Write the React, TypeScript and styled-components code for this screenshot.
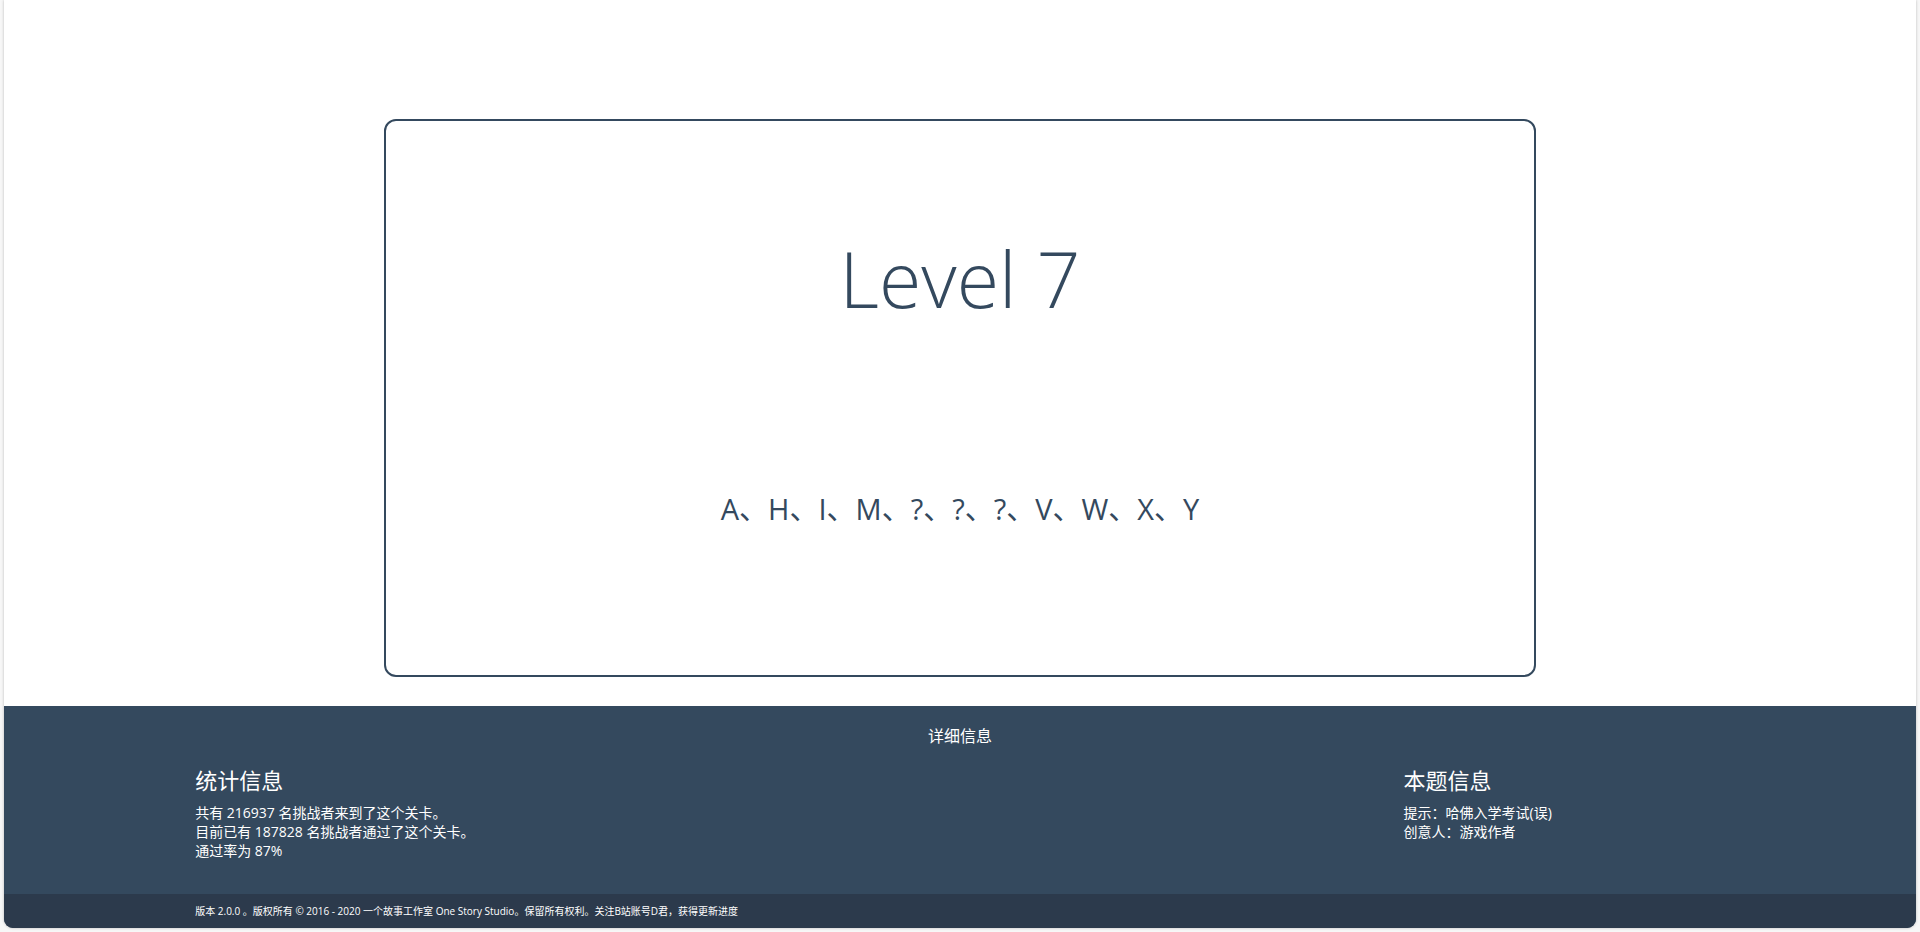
import React from "react";
import styled, { createGlobalStyle } from "styled-components";

const GlobalStyle = createGlobalStyle`
  html, body, #root { height: 100%; }
  body {
    margin: 0;
    background: #f7f7f7;
    font-family: "Open Sans", "Noto Sans CJK SC", sans-serif;
    color: #34495e;
  }
  *, *::before, *::after { box-sizing: border-box; }
`;

const Page = styled.div`
  min-height: 100%;
  padding: 0 4px 4px;
  display: flex;
`;

const Shell = styled.div`
  flex: 1;
  display: flex;
  flex-direction: column;
  background: #fff;
  border-radius: 0 0 9px 9px;
  overflow: hidden;
  box-shadow: 0 0 3px rgba(0, 0, 0, 0.25);
`;

const Stage = styled.main`
  flex: 1;
  display: flex;
  justify-content: center;
  padding: 119px 0 29px;
`;

const Card = styled.section`
  width: calc(60% + 4px);
  border: 2px solid #34495e;
  border-radius: 12px;
  display: flex;
  flex-direction: column;
  align-items: center;
`;

const Title = styled.h1`
  margin: 102px 0 0;
  font-size: 77px;
  line-height: 112px;
  font-weight: 300;
`;

const Puzzle = styled.p`
  margin: 154px 0 0;
  font-size: 29px;
  line-height: 40px;
`;

const Footer = styled.footer`
  color: #fff;
  background: #34495e;
`;

const Details = styled.div`
  padding: 19px 10% 34px;
`;

const DetailsTitle = styled.p`
  margin: 0;
  text-align: center;
  font-size: 16px;
  line-height: 22px;
`;

const Columns = styled.div`
  display: grid;
  grid-template-columns: 79fr 21fr;
  margin-top: 17px;
`;

const ColumnTitle = styled.h2`
  margin: 0 0 7px;
  font-size: 22px;
  line-height: 32px;
  font-weight: 400;
`;

const Line = styled.p`
  margin: 0;
  font-size: 14px;
  line-height: 19px;
`;

const Copyright = styled.div`
  padding: 8px 10%;
  background: #2c3a4c;
  font-size: 10px;
  line-height: 18px;
`;

function Column({ title, lines }: { title: string; lines: string[] }) {
  return (
    <section>
      <ColumnTitle>{title}</ColumnTitle>
      {lines.map((line) => (
        <Line key={line}>{line}</Line>
      ))}
    </section>
  );
}

export default function App() {
  return (
    <Page lang="zh-CN">
      <GlobalStyle />
      <Shell>
        <Stage>
          <Card>
            <Title>Level 7</Title>
            <Puzzle>A、H、I、M、?、?、?、V、W、X、Y</Puzzle>
          </Card>
        </Stage>
        <Footer>
          <Details>
            <DetailsTitle>详细信息</DetailsTitle>
            <Columns>
              <Column
                title="统计信息"
                lines={[
                  "共有 216937 名挑战者来到了这个关卡。",
                  "目前已有 187828 名挑战者通过了这个关卡。",
                  "通过率为 87%",
                ]}
              />
              <Column
                title="本题信息"
                lines={["提示：哈佛入学考试(误)", "创意人：游戏作者"]}
              />
            </Columns>
          </Details>
          <Copyright>
            版本 2.0.0 。版权所有 © 2016 - 2020 一个故事工作室 One Story
            Studio。保留所有权利。关注B站账号D君，获得更新进度
          </Copyright>
        </Footer>
      </Shell>
    </Page>
  );
}
